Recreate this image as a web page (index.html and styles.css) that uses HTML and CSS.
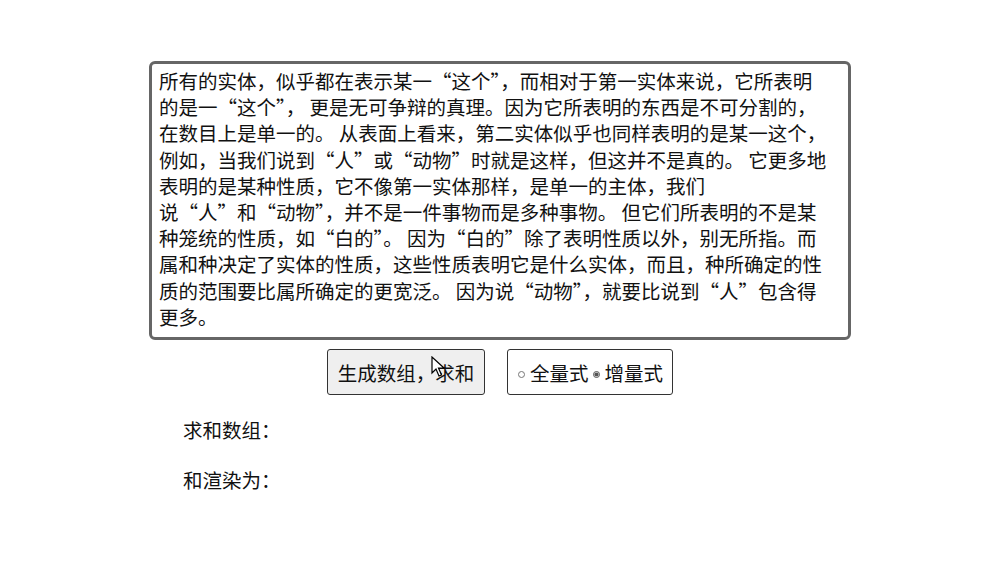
FILE: index.html
```html
<!DOCTYPE html>
<html lang="zh-CN">
<head>
    <meta charset="UTF-8">
    <meta name="viewport" content="width=device-width, initial-scale=1.0">
    <title>求和</title>
    <link rel="stylesheet" href="styles.css">
</head>
<body>
    <div id="app">
        <textarea id="source-text" wrap="off" spellcheck="false">所有的实体，似乎都在表示某一“这个”，而相对于第一实体来说，它所表明
的是一“这个”， 更是无可争辩的真理。因为它所表明的东西是不可分割的，
在数目上是单一的。 从表面上看来，第二实体似乎也同样表明的是某一这个，
例如，当我们说到“人”或“动物”时就是这样，但这并不是真的。 它更多地
表明的是某种性质，它不像第一实体那样，是单一的主体，我们
说“人”和“动物”，并不是一件事物而是多种事物。 但它们所表明的不是某
种笼统的性质，如“白的”。 因为“白的”除了表明性质以外，别无所指。而
属和种决定了实体的性质，这些性质表明它是什么实体，而且，种所确定的性
质的范围要比属所确定的更宽泛。 因为说“动物”，就要比说到“人”包含得
更多。</textarea>
        <div id="controls">
            <div class="btn-wrap">
                <button id="sum-btn">生成数组，求和</button>
                <svg class="cursor" width="14" height="22" viewBox="0 0 14 22">
                    <path d="M1 1 L1 17 L5 13 L8 20 L10.5 19 L7.5 12 L13 12 Z" fill="#fff" stroke="#000" stroke-width="1.2" stroke-linejoin="miter"/>
                </svg>
            </div>
            <div id="mode-box">
                <label><input type="radio" name="mode" value="full">全量式</label>
                <label><input type="radio" name="mode" value="inc" checked>增量式</label>
            </div>
        </div>
        <div class="result-row">求和数组：<span id="sum-array"></span></div>
        <div class="result-row">和渲染为：<span id="sum-render"></span></div>
    </div>
    <script>
        document.getElementById('sum-btn').addEventListener('click', function() {
            const nums = [];
            for (let i = 0; i < 10; i++) {
                nums.push(Math.floor(Math.random() * 100));
            }
            const total = nums.reduce((a, b) => a + b, 0);
            document.getElementById('sum-array').textContent = nums.join(', ');
            document.getElementById('sum-render').textContent = total;
        });
    </script>
</body>
</html>
```

FILE: styles.css
```css
body, html {
    margin: 0;
    padding: 0;
    background: #fff;
    font-family: "Noto Sans CJK SC", "Noto Sans", sans-serif;
    color: #111;
}
#app {
    width: 702px;
    margin: 0 auto;
    padding-top: 61px;
    display: flex;
    flex-direction: column;
}
#source-text {
    width: 702px;
    height: 279px;
    box-sizing: border-box;
    border: 3px solid #666;
    border-radius: 6px;
    padding: 4px 7px;
    font-family: inherit;
    font-size: 19.5px;
    line-height: 26.2px;
    color: #111;
    resize: none;
    overflow: hidden;
    outline: none;
}
#controls {
    display: flex;
    justify-content: center;
    gap: 22px;
    margin-top: 9px;
}
.btn-wrap {
    position: relative;
}
#sum-btn {
    height: 46px;
    width: 158px;
    padding: 0;
    font-family: inherit;
    font-size: 19.5px;
    color: #111;
    background: #efefef;
    border: 1px solid #333;
    border-radius: 3px;
}
.cursor {
    position: absolute;
    left: 104px;
    top: 7px;
}
#mode-box {
    height: 46px;
    width: 166px;
    box-sizing: border-box;
    border: 1px solid #333;
    border-radius: 3px;
    display: flex;
    align-items: center;
    padding-left: 7px;
    font-size: 19.5px;
}
#mode-box label {
    display: flex;
    align-items: center;
}
#mode-box label + label input {
    margin-left: 4px;
}
#mode-box input {
    width: 7px;
    height: 7px;
    margin: 4px 5px 0 3px;
    accent-color: #555;
    filter: grayscale(1);
}
.result-row {
    margin-left: 34px;
    font-size: 19.5px;
    line-height: 26px;
}
#controls + .result-row {
    margin-top: 22px;
}
.result-row + .result-row {
    margin-top: 24px;
}
```
